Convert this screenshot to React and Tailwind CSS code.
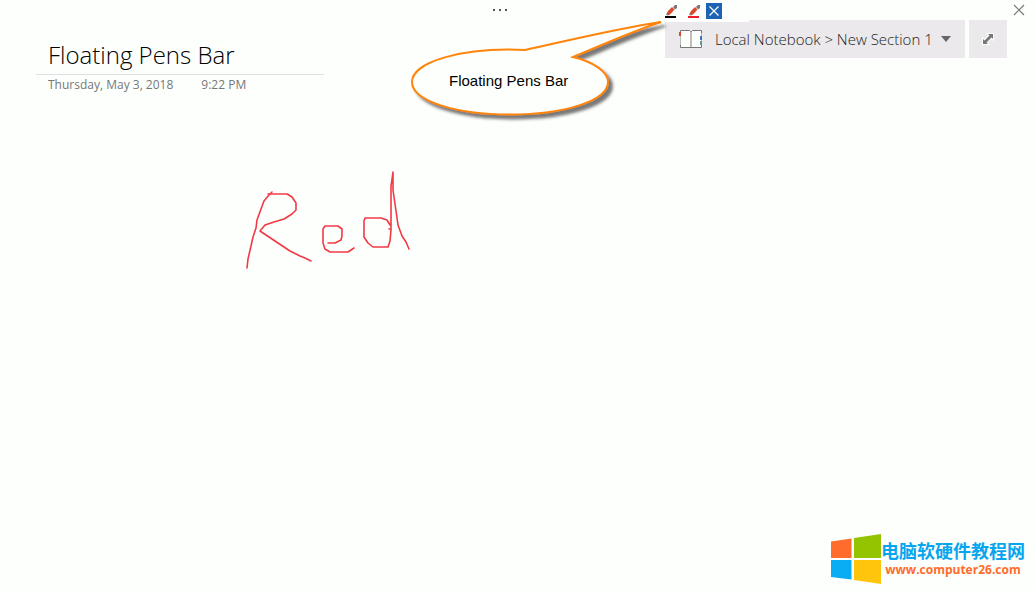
import React from "react";

function Pen({ color, label }) {
  return (
    <button type="button" aria-label={label} className="h-4 w-4">
      <svg viewBox="0 0 16 16" className="block h-4 w-4">
        <path d="M1 12L2.5 8.5L5.5 11L3 12.5Z" fill="#888" />
        <path d="M2 11L3 8L7 4L9.5 6.5L6 10.5L3.5 12Z" fill="#d9492b" />
        <path d="M8 4L10 2H12V5L10 6.5Z" fill="#777" />
        <rect x="0" y="13" width="11" height="2" fill={color} />
      </svg>
    </button>
  );
}

function PensBar() {
  return (
    <div role="toolbar" aria-label="Pens" className="absolute top-0 right-[286px] flex h-[22px] w-[84px] items-start gap-[7px] bg-[#fdfffc] pt-[3px]">
      <Pen color="#000000" label="Black pen" />
      <Pen color="#ee1c24" label="Red pen" />
      <button type="button" aria-label="Close pens bar" className="-ml-[5px] h-4 w-4 bg-[#1e62b4]">
        <svg viewBox="0 0 16 16" className="block h-4 w-4">
          <path d="M3.5 3.5L12.5 12.5M12.5 3.5L3.5 12.5" stroke="#fff" strokeWidth="1.2" />
        </svg>
      </button>
    </div>
  );
}

function Callout() {
  return (
    <div className="absolute top-4 right-[365px] h-[108px] w-[264px]">
      <svg viewBox="406 16 264 108" className="block h-full w-full overflow-visible">
        <defs>
          <filter id="shadow" x="-10%" y="-20%" width="120%" height="150%">
            <feDropShadow dx="4" dy="4" stdDeviation="1.8" floodColor="#333" floodOpacity="0.65" />
          </filter>
        </defs>
        <path
          d="M525 50C575 39 615 29 661 22C628 33 600 46 573 57C594 62 608 72 608 82C608 101 564 114.500 510 114.500C456 114.500 412 101 412 82C412 62 462 47 525 50Z"
          fill="#fdfffc"
          stroke="#ff8408"
          strokeWidth="2"
          filter="url(#shadow)"
        />
      </svg>
      <p className="absolute top-[55px] left-[43px] font-['Liberation_Sans',Arial,sans-serif] text-[15px] leading-5 whitespace-nowrap text-black">
        Floating Pens Bar
      </p>
    </div>
  );
}

function NotebookBar() {
  return (
    <nav className="flex gap-1 pr-7" aria-label="Notebook location">
      <button type="button" className="flex h-[38px] w-[300px] items-center bg-[#ebe9eb] pl-[14px] text-[15px] font-light text-[#222]">
        <svg viewBox="0 0 24 20" className="block h-5 w-6 shrink-0" fill="none">
          <path d="M2 2H22V18H2Z" fill="#fdfffc" />
          <path d="M1.500 4V1.500H10.500L12 3L13.500 1.500H22.500V4M1.500 16V18.500H22.500V16" stroke="#777" />
          <path d="M1.500 4V16M22.500 4V16" stroke="#bbb" />
          <path d="M12 2.500V18" stroke="#aaa" strokeWidth="1.500" />
          <path d="M0 3H2V7H0Z" fill="#d9492b" />
          <path d="M21 7H23V11H21Z" fill="#3c75b5" />
          <path d="M21 12H23V16H21Z" fill="#5b9c8c" />
        </svg>
        <span className="ml-3 whitespace-nowrap">Local Notebook &gt; New Section 1</span>
        <svg viewBox="0 0 10 6" className="mr-[14px] ml-auto block h-[6px] w-[10px] shrink-0">
          <path d="M0 0H10L5 6Z" fill="#666" />
        </svg>
      </button>
      <button type="button" aria-label="Exit full page view" className="flex h-[38px] w-[38px] items-center justify-center bg-[#ebe9eb]">
        <svg viewBox="0 0 12 12" className="block h-3 w-3 overflow-visible">
          <path
            d="M6 1H11V6L9.500 4.500L4.500 9.500L6 11H1V6L2.500 7.500L7.500 2.500Z"
            fill="#777"
            stroke="#fdfffc"
            strokeWidth="2"
            paintOrder="stroke"
          />
        </svg>
      </button>
    </nav>
  );
}

function Ink() {
  return (
    <svg viewBox="240 165 180 110" role="img" aria-label="Red" className="mt-[70px] ml-60 block h-[110px] w-[180px]" fill="none" stroke="#f23a45" strokeWidth="1.6" strokeLinecap="round" strokeLinejoin="round">
      <path d="M247 268L248 259L251 246L253 237L256 228L257 220L261 209L264 201L269 195L272 192" />
      <path d="M268 194H287L292 197L296 203V210L292 214L284 219L274 222L265 225L260 231L275 241L290 251L300 256L305 258L311 261" />
      <path d="M328 243L335 243L341 240L342 236V229L338 226H325L323 229V243L325 249L330 252H348L354 248" />
      <path d="M389 229L391 229M390 225L387 220L381 218L374 218H365L364 221V237L368 243L373 247H388L390 241L391 230V186L393 172V190L396 211L398 225L402 236L406 242L409 249" />
    </svg>
  );
}

function Watermark() {
  return (
    <a href="http://www.computer26.com" className="mt-auto mr-[10px] mb-[6px] flex items-start self-end">
      <svg viewBox="0 0 50 50" className="block h-[50px] w-[50px]">
        <path d="M0 7.500L20.500 4.500V24H0Z" fill="#ff6c2c" />
        <path d="M23 4L50 0V24H23Z" fill="#94c400" />
        <path d="M0 26H20.500V45.500L0 43Z" fill="#08adf4" />
        <path d="M23 26H50V50L23 46Z" fill="#ffc40c" />
      </svg>
      <span className="flex flex-col items-center pt-[5px]">
        <span className="font-['Noto_Sans_CJK_SC',sans-serif] text-[18px] leading-[22px] font-bold whitespace-nowrap text-[#08a5ef]">电脑软硬件教程网</span>
        <span className="font-['Open_Sans',sans-serif] text-[12px] leading-[18px] font-bold text-[#ff6c2c]">www.computer26.com</span>
      </span>
    </a>
  );
}

export default function App() {
  return (
    <main className="relative flex min-h-screen flex-col overflow-hidden bg-[#fdfffc] font-['Open_Sans','Noto_Sans',sans-serif]">
      <header className="flex h-5 items-center">
        <div className="flex flex-1 justify-center pr-1">
          <button type="button" aria-label="More options" className="flex h-5 w-6 items-center justify-center gap-1">
            <span className="h-[2px] w-[2px] bg-[#555]" />
            <span className="h-[2px] w-[2px] bg-[#555]" />
            <span className="h-[2px] w-[2px] bg-[#555]" />
          </button>
        </div>
        <button type="button" aria-label="Close" className="flex h-5 w-8 items-center justify-center">
          <svg viewBox="0 0 12 12" className="block h-3 w-3">
            <path d="M1 1L11 11M11 1L1 11" stroke="#777" strokeWidth="1.2" />
          </svg>
        </button>
      </header>
      <div className="flex items-start justify-between">
        <section className="ml-9 w-72 pt-4">
          <h1 className="border-b border-[#e0e0e0] pt-px pb-[2px] pl-3 text-[24px] leading-[35px] font-light whitespace-nowrap text-black">
            Floating Pens Bar
          </h1>
          <p className="flex gap-7 pl-3 text-[12px] leading-5 whitespace-nowrap text-[#777]">
            <time dateTime="2018-05-03">Thursday, May 3, 2018</time>
            <time dateTime="21:22">9:22 PM</time>
          </p>
        </section>
        <NotebookBar />
      </div>
      <Ink />
      <Watermark />
      <Callout />
      <PensBar />
    </main>
  );
}
